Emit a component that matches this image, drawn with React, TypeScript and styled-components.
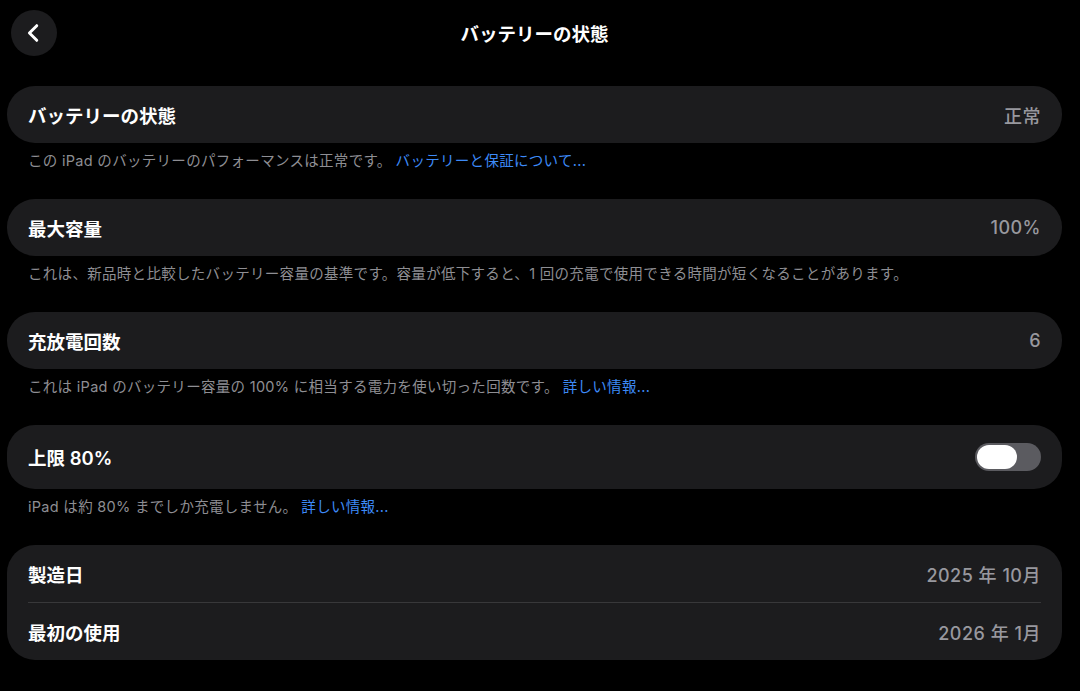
import styled, { createGlobalStyle } from 'styled-components'

const GlobalStyle = createGlobalStyle`
  html, body {
    margin: 0;
    padding: 0;
    background: #000;
  }
  body {
    font-family: Inter, "Noto Sans CJK JP", "Noto Sans", sans-serif;
    -webkit-font-smoothing: antialiased;
  }
`

const Page = styled.div`
  min-height: 100vh;
  background: #000;
  color: #fff;
  padding: 10px 18px 30px 7px;
  box-sizing: border-box;
`

const Header = styled.header`
  display: grid;
  grid-template-columns: 1fr auto 1fr;
  align-items: center;
  height: 46px;
  margin-bottom: 30px;
`

const BackButton = styled.button`
  width: 46px;
  height: 46px;
  margin-left: 4px;
  border-radius: 50%;
  border: none;
  background: #1c1c1e;
  display: flex;
  align-items: center;
  justify-content: center;
  padding: 0;
  cursor: pointer;
`

const Title = styled.h1`
  margin: 0;
  font-size: 18.5px;
  font-weight: 700;
  color: #fff;
`

const Section = styled.section`
  margin-bottom: 28px;
`

const Card = styled.div`
  background: #1c1c1e;
  border-radius: 28px;
  padding: 0 21px;
`

const Row = styled.div<{ $tall?: boolean }>`
  display: flex;
  align-items: center;
  justify-content: space-between;
  height: ${(p) => (p.$tall ? '64px' : '57px')};
  & + & {
    border-top: 1px solid #38383a;
  }
`

const Label = styled.span`
  font-size: 18.5px;
  font-weight: 600;
  color: #fff;
`

const Value = styled.span`
  font-size: 18px;
  font-weight: 500;
  letter-spacing: 0.5px;
  color: #98989e;
`

const Footer = styled.p`
  margin: 8px 0 0 21px;
  font-size: 14.5px;
  line-height: 20px;
  letter-spacing: 0.3px;
  color: #8e8e93;
`

const Link = styled.a`
  color: #3d8af7;
  text-decoration: none;
  margin-left: 4px;
`

const Toggle = styled.div`
  width: 66px;
  height: 28px;
  border-radius: 14px;
  background: #5b5b60;
  padding: 2px;
  box-sizing: border-box;
  display: flex;
  align-items: center;
`

const Knob = styled.div`
  width: 40px;
  height: 24px;
  border-radius: 12px;
  background: #fff;
`

function App() {
  return (
    <>
      <GlobalStyle />
      <Page>
        <Header>
          <BackButton aria-label="戻る">
            <svg width="22" height="22" viewBox="0 0 24 24" fill="none">
              <path d="M15 4 L7 12 L15 20" stroke="#fff" strokeWidth="3.2" strokeLinecap="round" strokeLinejoin="round" />
            </svg>
          </BackButton>
          <Title>バッテリーの状態</Title>
          <div />
        </Header>

        <Section>
          <Card>
            <Row>
              <Label>バッテリーの状態</Label>
              <Value>正常</Value>
            </Row>
          </Card>
          <Footer>
            この iPad のバッテリーのパフォーマンスは正常です。<Link>バッテリーと保証について...</Link>
          </Footer>
        </Section>

        <Section>
          <Card>
            <Row>
              <Label>最大容量</Label>
              <Value>100%</Value>
            </Row>
          </Card>
          <Footer>
            これは、新品時と比較したバッテリー容量の基準です。容量が低下すると、1 回の充電で使用できる時間が短くなることがあります。
          </Footer>
        </Section>

        <Section>
          <Card>
            <Row>
              <Label>充放電回数</Label>
              <Value>6</Value>
            </Row>
          </Card>
          <Footer>
            これは iPad のバッテリー容量の 100% に相当する電力を使い切った回数です。<Link>詳しい情報...</Link>
          </Footer>
        </Section>

        <Section>
          <Card>
            <Row $tall>
              <Label>上限 80%</Label>
              <Toggle>
                <Knob />
              </Toggle>
            </Row>
          </Card>
          <Footer>
            iPad は約 80% までしか充電しません。<Link>詳しい情報...</Link>
          </Footer>
        </Section>

        <Section>
          <Card>
            <Row>
              <Label>製造日</Label>
              <Value>2025 年 10月</Value>
            </Row>
            <Row>
              <Label>最初の使用</Label>
              <Value>2026 年 1月</Value>
            </Row>
          </Card>
        </Section>
      </Page>
    </>
  )
}

export default App
